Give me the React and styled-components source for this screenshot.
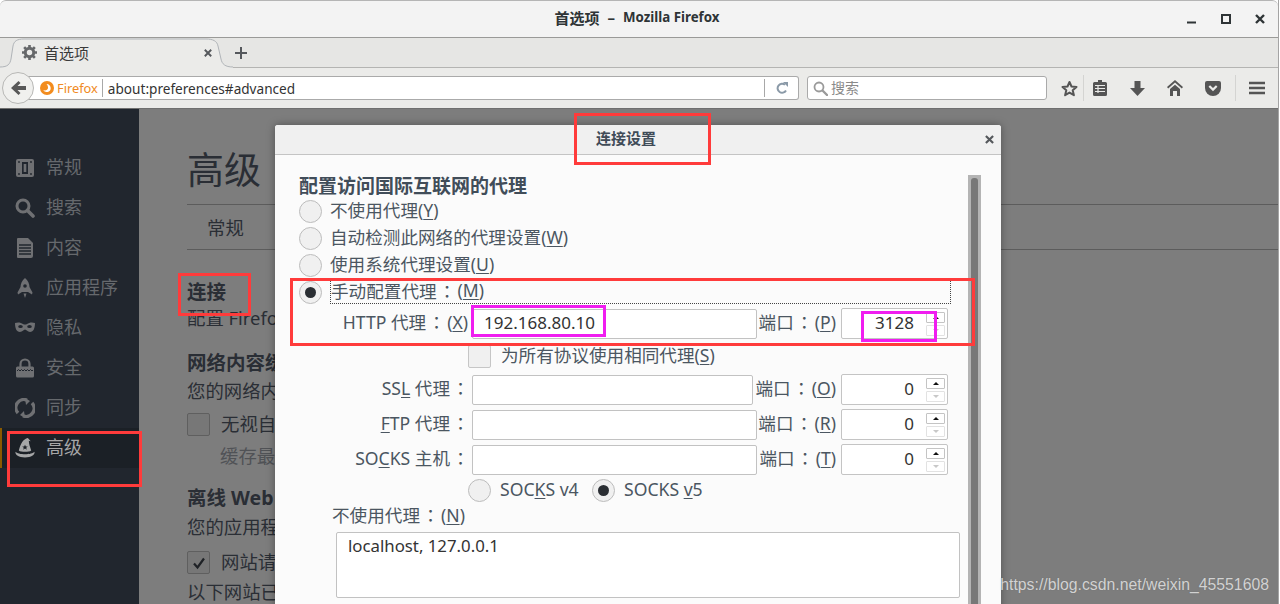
import React from "react";
import styled, { createGlobalStyle } from "styled-components";

const FONT = `"Noto Sans", "Noto Sans CJK SC", sans-serif`;

const Global = createGlobalStyle`
  html, body { margin: 0; padding: 0; background: #fff; }
  body { font-family: ${FONT}; }
  * { box-sizing: border-box; }
`;

const Page = styled.div`
  position: relative;
  width: 1279px;
  height: 604px;
  overflow: hidden;
  display: flex;
  flex-direction: column;
  border-right: 1px solid #a4a4a4;
`;

/* ---------- window chrome ---------- */
const TitleBar = styled.header`
  height: 38px;
  flex: none;
  display: grid;
  grid-template-columns: 1fr auto 1fr;
  align-items: center;
  padding-right: 4px;
  background: #f3f3f3;
  border-top: 1px solid #b5b5b5;
  border-bottom: 1px solid #9a9a98;
  border-radius: 6px 6px 0 0;
`;
const TitleText = styled.div`
  grid-column: 2;
  display: flex;
  align-items: center;
  gap: 8px;
  padding-bottom: 4px;
  font-size: 15px;
  font-weight: 700;
  color: #2e3436;
`;
const TitleApp = styled.span`
  font-size: 13.3px;
`;
const WindowButtons = styled.div`
  grid-column: 3;
  justify-self: end;
  display: flex;
  margin-right: -3px;
`;
const WindowButton = styled.div`
  width: 34px;
  height: 18px;
  display: flex;
  align-items: center;
  justify-content: center;
  color: #2e3436;
`;

const TabStrip = styled.div`
  position: relative;
  height: 30px;
  flex: none;
  display: flex;
  align-items: center;
  padding-left: 22px;
  background: #e6e6e4;
  border-bottom: 1px solid #b4b4b2;
`;
const TabShape = styled.svg`
  position: absolute;
  left: 0;
  top: 0;
`;
const Tab = styled.div`
  position: relative;
  width: 198px;
  display: flex;
  align-items: center;
  gap: 7px;
  font-size: 15px;
  color: #3a3a3a;
`;
const TabClose = styled.div`
  margin-left: auto;
  margin-right: 8px;
  display: flex;
`;
const NewTab = styled.div`
  position: relative;
  margin-left: 15px;
  display: flex;
`;

const NavBar = styled.nav`
  height: 41px;
  flex: none;
  display: flex;
  align-items: center;
  padding-left: 2px;
  background: #ebebe9;
  border-bottom: 1px solid #6f6f6f;
`;
const BackButton = styled.div`
  position: relative;
  z-index: 1;
  width: 32px;
  height: 32px;
  flex: none;
  display: flex;
  align-items: center;
  justify-content: center;
  border-radius: 50%;
  background: #f0f0ee;
  border: 1px solid #b8b8b6;
`;
const UrlBar = styled.div`
  width: 775px;
  height: 24px;
  margin-left: -10px;
  padding-left: 16px;
  flex: none;
  display: flex;
  align-items: center;
  background: #fff;
  border: 1px solid #aaa;
  border-left: 0;
  border-radius: 0 3px 3px 0;
  font-size: 13.6px;
`;
const Identity = styled.span`
  display: flex;
  align-items: center;
  gap: 3px;
  font-size: 12.8px;
  color: #f08a24;
`;
const Divider = styled.span`
  width: 1px;
  height: 18px;
  margin: ${(p) => p.$margin};
  background: #a8a8a8;
  flex: none;
`;
const UrlText = styled.span`
  flex: 1;
  color: #333;
`;
const Reload = styled.span`
  width: 33px;
  display: flex;
  justify-content: center;
`;
const SearchBar = styled.div`
  width: 240px;
  height: 24px;
  margin-left: 8px;
  padding-left: 5px;
  flex: none;
  display: flex;
  align-items: center;
  gap: 3px;
  background: #fff;
  border: 1px solid #aaa;
  border-radius: 3px;
  font-size: 14px;
  color: #8a8a8a;
`;
const SearchText = styled.span`
  padding-bottom: 2px;
`;
const ToolSlot = styled.div`
  width: ${(p) => p.$w}px;
  margin-left: ${(p) => p.$ml || 0}px;
  flex: none;
  display: flex;
  justify-content: center;
  align-items: center;
`;
const ToolSep = styled.div`
  width: 1px;
  height: 26px;
  flex: none;
  background: #d4d4d2;
`;

/* ---------- preferences page ---------- */
const Content = styled.div`
  position: relative;
  flex: 1;
  min-height: 0;
  display: flex;
  overflow: hidden;
`;
const Sidebar = styled.aside`
  width: 139px;
  flex: none;
  padding-top: 39px;
  background: #21262e;
`;
const SideItem = styled.div`
  height: 40px;
  display: flex;
  align-items: center;
  gap: 11px;
  padding-left: 15px;
  font-size: 18px;
  color: ${(p) => (p.$active ? "#a6a7a8" : "#66696d")};
  background: ${(p) => (p.$active ? "#1b2026" : "transparent")};
  box-shadow: ${(p) => (p.$active ? "inset 2px 0 0 #8a5a00" : "none")};
`;
const SideLabel = styled.span`
  padding-bottom: 4px;
`;
const SideIcon = styled.svg`
  width: 20px;
  height: 20px;
  flex: none;
`;
const Main = styled.main`
  flex: 1;
  padding: 39px 0 0 48px;
  background: #7d7d7d;
  color: #2a2e35;
  font-size: 18.4px;
  white-space: nowrap;
`;
const PageTitle = styled.h1`
  margin: 0;
  font-size: 37px;
  font-weight: 400;
  line-height: 44px;
`;
const PrefTabs = styled.div`
  height: 46px;
  margin-top: 12px;
  padding-left: 20px;
  display: flex;
  align-items: center;
  border-top: 1px solid #5c5c5c;
  border-bottom: 1px solid #5c5c5c;
`;
const SectionTitle = styled.div`
  margin-top: ${(p) => p.$mt}px;
  font-size: 19.5px;
  font-weight: 700;
  line-height: 26px;
`;
const BodyLine = styled.div`
  margin-top: ${(p) => p.$mt}px;
  padding-left: ${(p) => p.$indent || 0}px;
  line-height: 26px;
  color: ${(p) => (p.$muted ? "#505256" : "inherit")};
`;
const CheckRow = styled.div`
  height: 23px;
  margin-top: ${(p) => p.$mt}px;
  display: flex;
  align-items: center;
  gap: 11px;
`;
const CheckText = styled.span`
  padding-bottom: 4px;
`;
const DimCheck = styled.div`
  width: 23px;
  height: 23px;
  display: flex;
  align-items: center;
  justify-content: center;
  background: #777;
  border: 1px solid #5f5f5f;
  border-radius: 2px;
`;

/* ---------- dialog ---------- */
const Dialog = styled.section`
  position: absolute;
  left: 275px;
  top: 16px;
  width: 726px;
  height: 520px;
  background: #fbfbfb;
  border-radius: 3px 3px 0 0;
  box-shadow: 0 0 8px rgba(0, 0, 0, 0.35);
  display: flex;
  flex-direction: column;
`;
const DialogHeader = styled.div`
  height: 30px;
  flex: none;
  display: flex;
  align-items: center;
  justify-content: space-between;
  padding: 0 7px 0 321px;
  background: #f0f0f0;
  border-bottom: 1px solid #c4c4c4;
  border-radius: 3px 3px 0 0;
  font-size: 15px;
  font-weight: 700;
  color: #3f4b57;
`;
const DialogName = styled.span`
  padding-bottom: 4px;
`;
const DialogBody = styled.div`
  flex: 1;
  display: flex;
  padding-left: 24px;
  color: #4b5661;
  font-size: 17.6px;
`;
const Form = styled.div`
  width: 669px;
  flex: none;
  padding-top: 19px;
`;
const Scrollbar = styled.div`
  width: 13px;
  margin-top: 20px;
  padding: 3px 3px 0;
  flex: none;
  background: #b4b4b4;
`;
const ScrollThumb = styled.div`
  height: 100%;
  background: #787878;
  border-radius: 3px 3px 0 0;
`;
const FormTitle = styled.div`
  font-size: 19px;
  font-weight: 700;
  line-height: 24px;
  color: #414d59;
`;
const RadioRow = styled.div`
  height: 27px;
  display: flex;
  align-items: center;
  gap: 8px;
`;
const RadioText = styled.span`
  padding-bottom: ${(p) => p.$pb ?? 4}px;
`;
const Radio = styled.span`
  width: 23px;
  height: 23px;
  flex: none;
  display: flex;
  align-items: center;
  justify-content: center;
  border-radius: 50%;
  background: #f0f0f0;
  border: 1px solid #bcbcbc;
  &::after {
    content: "";
    display: ${(p) => (p.$on ? "block" : "none")};
    width: 11px;
    height: 11px;
    border-radius: 50%;
    background: #2a2e33;
  }
`;
const FocusLabel = styled.span`
  flex: 1;
  height: 23px;
  padding-bottom: 4px;
  display: flex;
  align-items: center;
  border: 1px dotted #444;
  border-top-style: none;
  margin-right: 17px;
`;
const Key = styled.span`
  text-decoration: underline;
  text-underline-offset: 2px;
`;
const Colon = styled.span`
  display: inline-block;
  width: 21px;
  text-align: center;
  font-family: "Noto Sans CJK TC", sans-serif;
`;
const ProxyRow = styled.div`
  height: 31px;
  margin-top: ${(p) => p.$mt}px;
  display: flex;
  align-items: center;
`;
const ProxyLabel = styled.label`
  width: ${(p) => p.$w}px;
  padding-bottom: 4px;
  flex: none;
  text-align: right;
  white-space: pre;
`;
const TextBox = styled.div`
  width: ${(p) => p.$w}px;
  height: 30px;
  margin-left: ${(p) => p.$ml}px;
  padding: 0 0 2px 11px;
  flex: none;
  display: flex;
  align-items: center;
  background: #fff;
  border: 1px solid #c2c2c2;
  border-radius: 2px;
  font-size: 17px;
  color: #333;
`;
const PortLabel = styled.label`
  flex: 1;
  padding: 0 5px 4px 0;
  text-align: right;
  white-space: pre;
`;
const Spinner = styled.div`
  width: 107px;
  height: 31px;
  margin-right: 20px;
  padding-right: 2px;
  flex: none;
  display: flex;
  align-items: center;
  justify-content: flex-end;
  background: #fff;
  border: 1px solid #c4c4c4;
  border-radius: 2px;
  font-size: 17px;
  color: #333;
`;
const SpinValue = styled.span`
  margin-right: 12px;
  padding-bottom: 2px;
`;
const SpinButtons = styled.div`
  display: flex;
  flex-direction: column;
  gap: 2px;
`;
const SpinButton = styled.div`
  width: 19px;
  height: 11px;
  display: flex;
  align-items: center;
  justify-content: center;
  border: 1px solid ${(p) => (p.$off ? "#e2e2e2" : "#c4c4c4")};
  border-radius: 1px;
  &::after {
    content: "";
    border-left: 3px solid transparent;
    border-right: 3px solid transparent;
    ${(p) =>
      p.$off
        ? "border-top: 3px solid #c8c8c8;"
        : "border-bottom: 3px solid #111;"}
  }
`;
const ShareRow = styled.div`
  height: 24px;
  margin-top: 5px;
  padding-left: 169px;
  display: flex;
  align-items: center;
  gap: 10px;
`;
const FormCheck = styled.span`
  width: 23px;
  height: 23px;
  background: #f0f0f0;
  border: 1px solid #c6c6c6;
  border-radius: 2px;
`;
const SocksRow = styled.div`
  height: 24px;
  margin-top: 3px;
  padding-left: 169px;
  display: flex;
  align-items: center;
`;
const SocksOption = styled.span`
  width: ${(p) => p.$w}px;
  display: flex;
  align-items: center;
  gap: 9px;
`;
const NoProxyLabel = styled.div`
  margin-top: 1px;
  padding-left: 33px;
  line-height: 24px;
`;
const TextArea = styled.div`
  width: 624px;
  height: 66px;
  margin: 5px 0 0 37px;
  padding: 1px 11px 0;
  background: #fff;
  border: 1px solid #c2c2c2;
  border-radius: 2px;
  font-size: 16.8px;
  line-height: 24px;
  color: #333;
`;

/* ---------- annotations on top of the screenshot ---------- */
const Mark = styled.div`
  position: absolute;
  left: ${(p) => p.$x}px;
  top: ${(p) => p.$y}px;
  width: ${(p) => p.$w}px;
  height: ${(p) => p.$h}px;
  border: 3px solid ${(p) => p.$color};
  pointer-events: none;
`;
const Watermark = styled.div`
  position: absolute;
  right: 9px;
  bottom: 8px;
  font-family: "Liberation Sans", sans-serif;
  font-size: 15.8px;
  line-height: 22px;
  color: #d2d2d2;
  text-shadow: 0 0 1px rgba(90, 90, 90, 0.6);
`;

const RED = "#ff3b3b";
const MAGENTA = "#f01df0";
const ICON = "#6f7073";
const HAT = "#a6a7a8";

const Ico = {
  general: (
    <SideIcon viewBox="0 0 20 20">
      <rect x="1" y="1" width="18" height="18" rx="2" fill={ICON} />
      <rect x="7" y="4" width="6" height="12" fill="#21262e" />
      <rect x="8.7" y="6" width="2.6" height="8" fill={ICON} />
      <circle cx="4" cy="4" r=".9" fill="#21262e" />
      <circle cx="16" cy="4" r=".9" fill="#21262e" />
      <circle cx="4" cy="16" r=".9" fill="#21262e" />
      <circle cx="16" cy="16" r=".9" fill="#21262e" />
    </SideIcon>
  ),
  search: (
    <SideIcon viewBox="0 0 20 20">
      <circle cx="8" cy="8" r="6" fill="none" stroke={ICON} strokeWidth="3" />
      <path d="M12.5 12.5 18 18" stroke={ICON} strokeWidth="3.6" strokeLinecap="round" />
    </SideIcon>
  ),
  content: (
    <SideIcon viewBox="0 0 20 20">
      <path d="M3 0h10l5 5v13a2 2 0 0 1-2 2H3a1 1 0 0 1-1-1V1a1 1 0 0 1 1-1z" fill={ICON} />
      <path d="M4 7h12M4 10h12M4 13h12M4 16h12" stroke="#21262e" strokeWidth="1.3" />
    </SideIcon>
  ),
  apps: (
    <SideIcon viewBox="0 0 20 20">
      <path d="M10 0c3 2.500 4.500 6 4.500 9l3 5.500-.5 2-4-2.500H7l-4 2.500-.5-2L5.500 9C5.500 6 7 2.500 10 0z" fill={ICON} />
      <circle cx="10" cy="8" r="1.800" fill="#21262e" />
      <path d="M8.500 15.500h3L10 20z" fill={ICON} />
    </SideIcon>
  ),
  privacy: (
    <SideIcon viewBox="0 0 20 20">
      <path d="M0 5c3-1 6-.5 8 1 1 .8 3 .8 4 0 2-1.500 5-2 8-1 0 5-1.500 9-5 9-2.500 0-3.500-2.500-5-2.500S7.500 14 5 14C1.500 14 0 10 0 5z" fill={ICON} />
      <ellipse cx="5.500" cy="8.500" rx="2.300" ry="1.500" fill="#21262e" />
      <ellipse cx="14.500" cy="8.500" rx="2.300" ry="1.500" fill="#21262e" />
    </SideIcon>
  ),
  security: (
    <SideIcon viewBox="0 0 20 20">
      <path d="M5.500 9V6a4.500 4.500 0 0 1 9 0v3" fill="none" stroke={ICON} strokeWidth="2.200" />
      <rect x="1" y="8.500" width="18" height="11" rx="1.500" fill={ICON} />
      <path d="M2 13l1.500-1.500L5 13l1.500-1.500L8 13l1.500-1.500L11 13l1.500-1.500L14 13l1.500-1.500L17 13l1-1" fill="none" stroke="#21262e" strokeWidth="1" />
    </SideIcon>
  ),
  sync: (
    <SideIcon viewBox="0 0 20 20">
      <path d="M3 15A8 8 0 0 1 12 2.200" fill="none" stroke={ICON} strokeWidth="3.400" />
      <path d="M17 5a8 8 0 0 1-9 12.800" fill="none" stroke={ICON} strokeWidth="3.400" />
      <path d="M10 0l5 3-4 4zM10 20l-5-3 4-4z" fill={ICON} />
    </SideIcon>
  ),
  advanced: (
    <SideIcon viewBox="0 0 20 21">
      <path d="M13 0C8 1 5.500 6 3.500 13c2.500 2 10.500 2 13 0-1-3-2.500-6.500-2.500-10l2 .5z" fill={HAT} />
      <path d="M0 14.500c2.500 3.500 17.500 3.500 20 0 .5 3.500-3.500 6-10 6S-.5 18 0 14.500z" fill={HAT} />
      <path d="M10 7l.9 2h2l-1.600 1.300.6 2L10 11l-1.900 1.300.6-2L7.100 9h2z" fill="#1b2026" />
    </SideIcon>
  ),
};

const sideItems = [
  ["general", "常规"],
  ["search", "搜索"],
  ["content", "内容"],
  ["apps", "应用程序"],
  ["privacy", "隐私"],
  ["security", "安全"],
  ["sync", "同步"],
  ["advanced", "高级"],
];

const XIcon = ({ size = 10, w = 2.6, color = "#55585c" }) => (
  <svg width={size} height={size} viewBox="0 0 10 10">
    <path d="M1 1l8 8M9 1l-8 8" stroke={color} strokeWidth={w} />
  </svg>
);

const Spin = ({ value }) => (
  <Spinner>
    <SpinValue>{value}</SpinValue>
    <SpinButtons>
      <SpinButton />
      <SpinButton $off />
    </SpinButtons>
  </Spinner>
);

const Row = ({ mt, w, labelW = 172, label, value, port, portValue }) => (
  <ProxyRow $mt={mt}>
    <ProxyLabel $w={labelW}>{label}</ProxyLabel>
    <TextBox $w={w} $ml={173 - labelW}>
      {value}
    </TextBox>
    <PortLabel>
      端口<Colon>：</Colon>(<Key>{port}</Key>)
    </PortLabel>
    <Spin value={portValue} />
  </ProxyRow>
);

export default function App() {
  return (
    <Page>
      <Global />
      <TitleBar>
        <TitleText>
          <span>首选项</span>
          <span>–</span>
          <TitleApp>Mozilla Firefox</TitleApp>
        </TitleText>
        <WindowButtons>
          <WindowButton>
            <svg width="10" height="10" viewBox="0 0 10 10">
              <rect x="0" y="7.500" width="9" height="2" fill="#2e3436" />
            </svg>
          </WindowButton>
          <WindowButton>
            <svg width="10" height="10" viewBox="0 0 10 10">
              <rect x="1" y="1" width="8" height="8" fill="none" stroke="#2e3436" strokeWidth="2" />
            </svg>
          </WindowButton>
          <WindowButton>
            <XIcon size={10} w={2.4} color="#2e3436" />
          </WindowButton>
        </WindowButtons>
      </TitleBar>

      <TabStrip>
        <TabShape width="240" height="30" viewBox="0 0 240 30">
          <path
            d="M0 29C8 29 10 26 11 21L13 8C14 3 17 1 24 1L206 1C213 1 217 3 218 8L221 21C222 26 225 29 233 29V30H0Z"
            fill="#ebebe9"
          />
          <path
            d="M0 29C8 29 10 26 11 21L13 8C14 3 17 1 24 1L206 1C213 1 217 3 218 8L221 21C222 26 225 29 233 29"
            fill="none"
            stroke="#b0b4b8"
          />
        </TabShape>
        <Tab>
          <svg width="15" height="15" viewBox="0 0 16 16">
            <circle cx="8" cy="8" r="4.500" fill="none" stroke="#66686a" strokeWidth="3.200" />
            <path
              d="M8 0v3M8 13v3M0 8h3M13 8h3M2.300 2.300l2.200 2.200M11.500 11.500l2.200 2.200M2.300 13.700l2.200-2.200M11.500 4.500l2.200-2.200"
              stroke="#66686a"
              strokeWidth="2.800"
            />
          </svg>
          首选项
          <TabClose>
            <XIcon size={8} w={2.4} />
          </TabClose>
        </Tab>
        <NewTab>
          <svg width="12" height="12" viewBox="0 0 12 12">
            <path d="M6 0v12M0 6h12" stroke="#55585c" strokeWidth="2" />
          </svg>
        </NewTab>
      </TabStrip>

      <NavBar>
        <BackButton>
          <svg width="15" height="14" viewBox="0 0 15 14">
            <path d="M7.500 0l2 2-3 3H15v4H6.500l3 3-2 2L0 7z" fill="#585858" />
          </svg>
        </BackButton>
        <UrlBar>
          <Identity>
            <svg width="14" height="14" viewBox="0 0 14 14">
              <circle cx="7" cy="7" r="7" fill="#f28c1e" />
              <path d="M6.500 3a4 4 0 0 1 4.200 4.200A4 4 0 0 1 3.200 9C5 10 7.800 9.300 8 7 8.100 5.500 7.500 4 6.500 3z" fill="#fff" />
            </svg>
            Firefox
          </Identity>
          <Divider $margin="0 5px 0 4px" />
          <UrlText>about:preferences#advanced</UrlText>
          <Divider $margin="0" />
          <Reload>
            <svg width="12" height="12" viewBox="0 0 12 12">
              <path d="M10 8.500A4.500 4.500 0 1 1 9 2.800" fill="none" stroke="#8b9aa8" strokeWidth="2" />
              <path d="M7 0h5v5z" fill="#8b9aa8" />
            </svg>
          </Reload>
        </UrlBar>
        <SearchBar>
          <svg width="15" height="15" viewBox="0 0 15 15">
            <circle cx="6" cy="6" r="4.500" fill="none" stroke="#9a9a9a" strokeWidth="1.800" />
            <path d="M9.500 9.500 14 14" stroke="#9a9a9a" strokeWidth="2.400" strokeLinecap="round" />
          </svg>
          <SearchText>搜索</SearchText>
        </SearchBar>
        <ToolSlot $w={28} $ml={8}>
          <svg width="17" height="17" viewBox="0 0 17 17">
            <path
              d="M8.500 2l2 4.500 5 .5-3.800 3.300 1.200 4.900-4.400-2.600-4.400 2.600 1.200-4.900L1.500 7l5-.5z"
              fill="none"
              stroke="#555"
              strokeWidth="2"
              strokeLinejoin="round"
            />
          </svg>
        </ToolSlot>
        <ToolSep />
        <ToolSlot $w={31}>
          <svg width="14" height="16" viewBox="0 0 14 16">
            <path d="M1.500 2H5V0h4v2h3.500A1.500 1.500 0 0 1 14 3.500v11a1.500 1.500 0 0 1-1.500 1.500h-11A1.500 1.500 0 0 1 0 14.500v-11A1.500 1.500 0 0 1 1.500 2z" fill="#555" />
            <path d="M2 5.500h10M2 8.500h10M2 11.500h10M5 5v8" stroke="#ebebe9" strokeWidth="1.200" />
          </svg>
        </ToolSlot>
        <ToolSlot $w={44}>
          <svg width="15" height="15" viewBox="0 0 15 15">
            <path d="M4.500 0h6v7H15l-7.500 8L0 7h4.500z" fill="#555" />
          </svg>
        </ToolSlot>
        <ToolSlot $w={32}>
          <svg width="16" height="16" viewBox="0 0 16 16">
            <path d="M8 0l8 7-1.200 1.400L8 2.500 1.200 8.400 0 7z" fill="#555" />
            <path d="M3 9l5-4.300L13 9v7h-3v-5H6v5H3z" fill="#555" />
          </svg>
        </ToolSlot>
        <ToolSlot $w={44}>
          <svg width="16" height="15" viewBox="0 0 16 15">
            <path d="M2 0h12a2 2 0 0 1 2 2v5a8 8 0 0 1-16 0V2a2 2 0 0 1 2-2z" fill="#555" />
            <path d="M4.300 5 8 8.600 11.700 5" fill="none" stroke="#ebebe9" strokeWidth="2.200" />
          </svg>
        </ToolSlot>
        <ToolSep />
        <ToolSlot $w={41}>
          <svg width="16" height="14" viewBox="0 0 16 14">
            <path d="M0 2h16M0 7h16M0 12h16" stroke="#555" strokeWidth="2.400" />
          </svg>
        </ToolSlot>
      </NavBar>

      <Content>
        <Sidebar>
          {sideItems.map(([id, label]) => (
            <SideItem key={id} $active={id === "advanced"}>
              {Ico[id]}
              <SideLabel>{label}</SideLabel>
            </SideItem>
          ))}
        </Sidebar>
        <Main>
          <PageTitle>高级</PageTitle>
          <PrefTabs>常规</PrefTabs>
          <SectionTitle $mt={29}>连接</SectionTitle>
          <BodyLine $mt={0}>配置 Firefox</BodyLine>
          <SectionTitle $mt={19}>网络内容缓存</SectionTitle>
          <BodyLine $mt={2}>您的网络内容</BodyLine>
          <CheckRow $mt={9}>
            <DimCheck />
            <CheckText>无视自动</CheckText>
          </CheckRow>
          <BodyLine $mt={7} $indent={33} $muted>
            缓存最多
          </BodyLine>
          <SectionTitle $mt={16}>离线 Web 内容</SectionTitle>
          <BodyLine $mt={3}>您的应用程序</BodyLine>
          <CheckRow $mt={11}>
            <DimCheck>
              <svg width="14" height="14" viewBox="0 0 14 14">
                <path d="M2 7.500l3.500 4L12 2.500" fill="none" stroke="#1f2226" strokeWidth="2.200" />
              </svg>
            </DimCheck>
            <CheckText>网站请求</CheckText>
          </CheckRow>
          <BodyLine $mt={5}>以下网站已获</BodyLine>
        </Main>

        <Dialog>
          <DialogHeader>
            <DialogName>连接设置</DialogName>
            <XIcon size={9} w={2.4} />
          </DialogHeader>
          <DialogBody>
            <Form>
              <FormTitle>配置访问国际互联网的代理</FormTitle>
              <RadioRow>
                <Radio />
                <RadioText>
                  不使用代理(<Key>Y</Key>)
                </RadioText>
              </RadioRow>
              <RadioRow>
                <Radio />
                <RadioText>
                  自动检测此网络的代理设置(<Key>W</Key>)
                </RadioText>
              </RadioRow>
              <RadioRow>
                <Radio />
                <RadioText>
                  使用系统代理设置(<Key>U</Key>)
                </RadioText>
              </RadioRow>
              <RadioRow>
                <Radio $on />
                <FocusLabel>
                  手动配置代理<Colon>：</Colon>(<Key>M</Key>)
                </FocusLabel>
              </RadioRow>
              <Row
                mt={2}
                w={285}
                labelW={169}
                label={
                  <>
                    HTTP 代理<Colon>：</Colon>(<Key>X</Key>)
                  </>
                }
                value="192.168.80.10"
                port="P"
                portValue="3128"
              />
              <ShareRow>
                <FormCheck />
                <RadioText>
                  为所有协议使用相同代理(<Key>S</Key>)
                </RadioText>
              </ShareRow>
              <Row
                mt={6}
                w={281}
                label={
                  <>
                    SS<Key>L</Key> 代理<Colon>：</Colon>
                  </>
                }
                port="O"
                portValue="0"
              />
              <Row
                mt={4}
                w={285}
                label={
                  <>
                    <Key>F</Key>TP 代理<Colon>：</Colon>
                  </>
                }
                port="R"
                portValue="0"
              />
              <Row
                mt={4}
                w={285}
                label={
                  <>
                    SO<Key>C</Key>KS 主机<Colon>：</Colon>
                  </>
                }
                port="T"
                portValue="0"
              />
              <SocksRow>
                <SocksOption $w={124}>
                  <Radio />
                  <RadioText $pb={2}>
                    SOC<Key>K</Key>S v4
                  </RadioText>
                </SocksOption>
                <SocksOption $w={140}>
                  <Radio $on />
                  <RadioText $pb={2}>
                    SOCKS <Key>v</Key>5
                  </RadioText>
                </SocksOption>
              </SocksRow>
              <NoProxyLabel>
                不使用代理<Colon>：</Colon>(<Key>N</Key>)
              </NoProxyLabel>
              <TextArea>localhost, 127.0.0.1</TextArea>
            </Form>
            <Scrollbar>
              <ScrollThumb />
            </Scrollbar>
          </DialogBody>
        </Dialog>
      </Content>

      <Mark $x={574} $y={113} $w={137} $h={52} $color={RED} />
      <Mark $x={178} $y={273} $w={73} $h={43} $color={RED} />
      <Mark $x={7} $y={431} $w={135} $h={56} $color={RED} />
      <Mark $x={290} $y={278} $w={685} $h={68} $color={RED} />
      <Mark $x={471} $y={305} $w={135} $h={32} $color={MAGENTA} />
      <Mark $x={861} $y={311} $w={76} $h={31} $color={MAGENTA} />
      <Watermark>https://blog.csdn.net/weixin_45551608</Watermark>
    </Page>
  );
}
